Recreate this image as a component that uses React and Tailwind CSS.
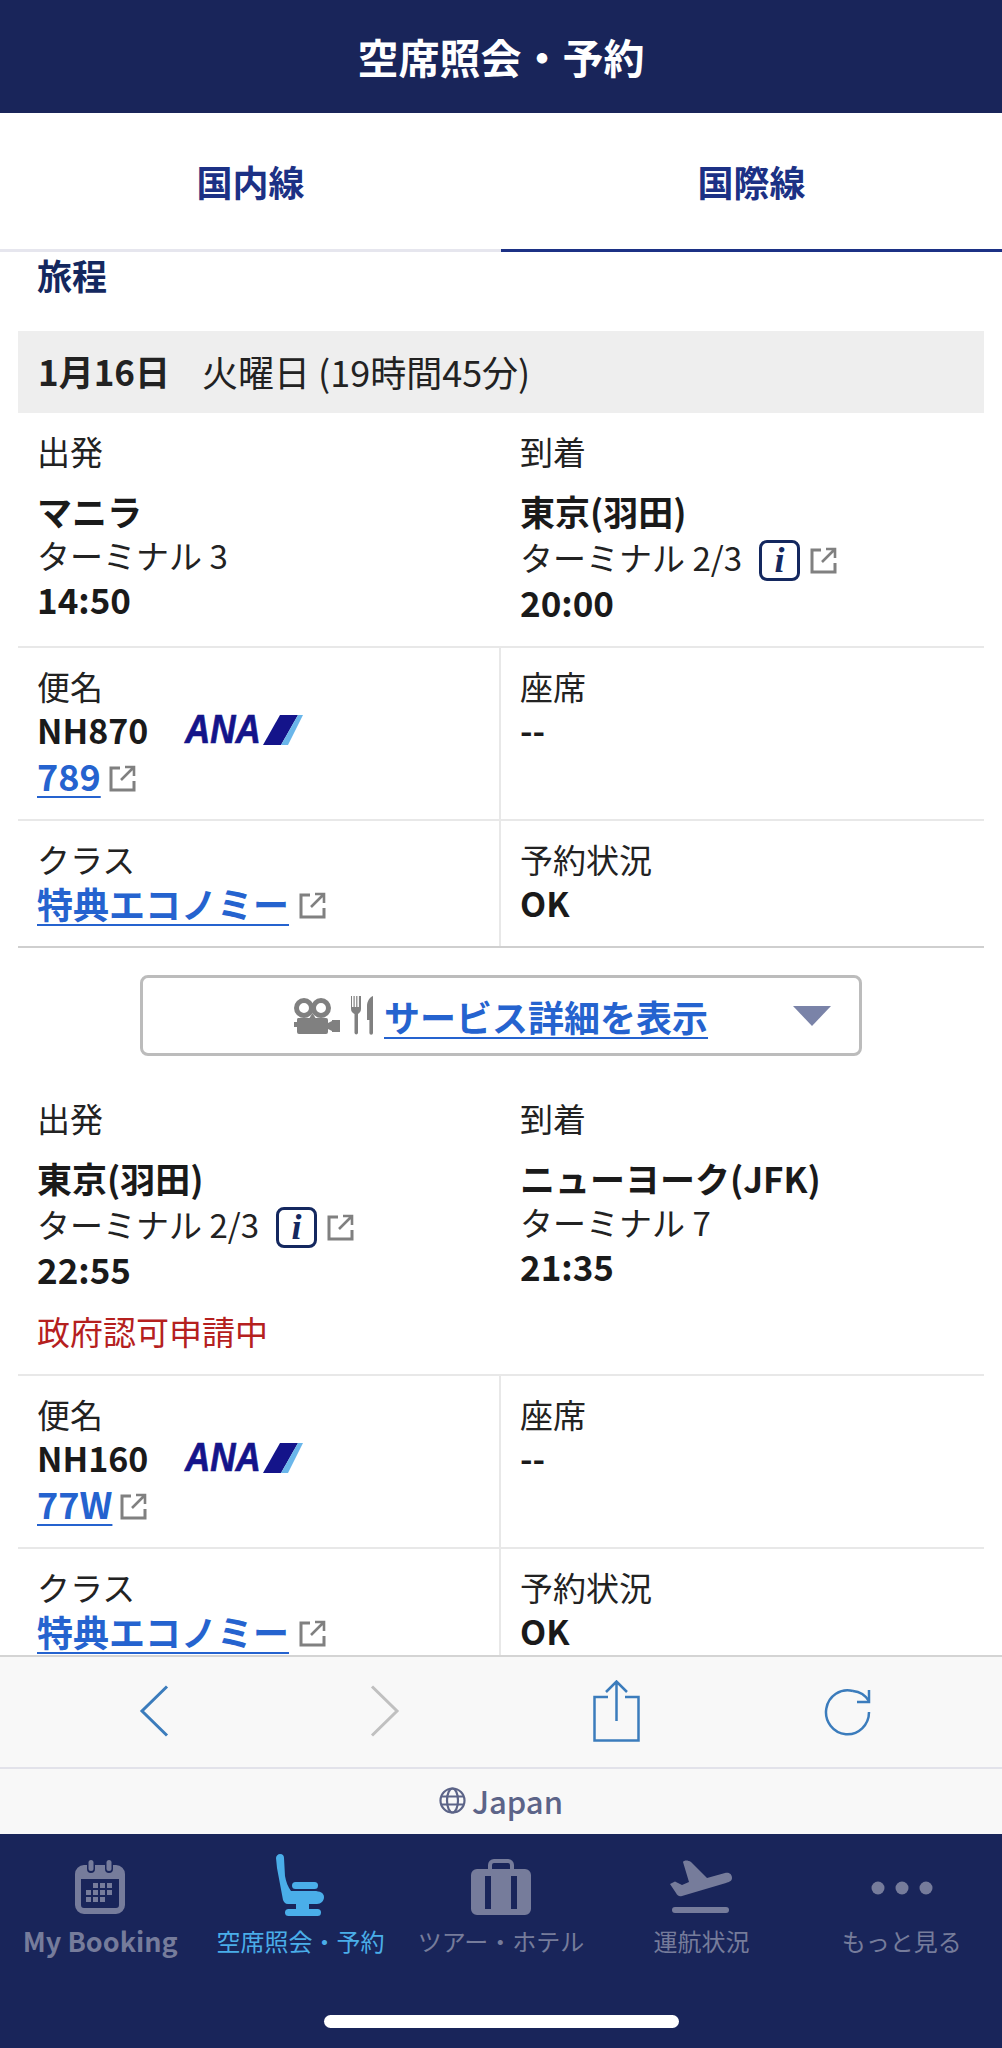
const FONT = { fontFamily: '"Noto Sans CJK JP", "Noto Sans", sans-serif' };

function ExtLink() {
  return (
    <svg width="27" height="27" viewBox="0 0 27 27" fill="none" stroke="#808080" strokeWidth="3" className="shrink-0 mt-[6px]">
      <path d="M11 3H2v22h23v-9" />
      <path d="M12 15L24 3M16 2h9v9" strokeWidth="2.6" />
    </svg>
  );
}

function InfoBadge() {
  return (
    <span className="w-[41px] h-[41px] mt-[5px] rounded-[8px] border-[3px] border-[#14285f] flex items-center justify-center text-[#14285f] text-[36px] font-bold italic leading-none shrink-0" style={{ fontFamily: '"Liberation Serif", serif' }}>
      i
    </span>
  );
}

function AnaLogo() {
  return (
    <svg width="120" height="32" viewBox="0 0 120 32" className="shrink-0 overflow-visible">
      <text x="0" y="25.500" transform="scale(1 1.15)" fontSize="35" fontWeight="700" fontStyle="italic" fill="#14148a" stroke="#14148a" strokeWidth="0.6" style={{ fontFamily: '"Liberation Sans", sans-serif' }}>ANA</text>
      <polygon points="95,1 113,1 96,31 78,31" fill="#14148a" />
      <polygon points="113,1 118,1 103,31 96,31" fill="#6ab6ea" />
    </svg>
  );
}

function Label({ children }) {
  return <div className="h-[44px] leading-[44px] text-[33px] text-[#222]">{children}</div>;
}

function Place({ label, name, terminal, time, badge, note }) {
  return (
    <div className="pl-[19px] pt-[16px]">
      <Label>{label}</Label>
      <div className="mt-[16px] h-[44px] leading-[44px] text-[35px] font-bold text-[#1a1a1a] whitespace-nowrap">{name}</div>
      <div className={`flex items-center gap-[17px] mt-[1px] text-[33px] text-[#222] whitespace-nowrap ${badge ? "h-[47px]" : "h-[44px]"}`}>
        <span>{terminal}</span>
        {badge && (
          <span className="flex items-center gap-[10px]">
            <InfoBadge />
            <ExtLink />
          </span>
        )}
      </div>
      <div className="h-[42px] leading-[42px] text-[35px] font-semibold text-[#1a1a1a]">{time}</div>
      {note && <div className="mt-[19px] h-[44px] leading-[44px] text-[33px] text-[#b5201e]">{note}</div>}
    </div>
  );
}

function Segment({ from, to, flight, plane, rowHeight, last }) {
  return (
    <div className="mx-[18px]">
      <div className="grid grid-cols-2 border-b-2 border-[#e8e8e8]" style={{ height: rowHeight }}>
        <Place {...from} />
        <Place {...to} />
      </div>
      <div className="grid grid-cols-2 h-[173px] border-b-2 border-[#e8e8e8]">
        <div className="pl-[19px] pt-[16px] border-r-2 border-[#e8e8e8]">
          <Label>便名</Label>
          <div className="flex items-center h-[43px] text-[34px] font-semibold text-[#1a1a1a]">
            <span className="w-[148px]">{flight}</span>
            <AnaLogo />
          </div>
          <div className="flex items-center gap-[8px] h-[48px] text-[36px] font-semibold">
            <a className="text-[#2563cf] underline underline-offset-[5px] decoration-2">{plane}</a>
            <ExtLink />
          </div>
        </div>
        <div className="pl-[19px] pt-[16px]">
          <Label>座席</Label>
          <div className="h-[43px] leading-[43px] text-[34px] font-semibold text-[#1a1a1a]">--</div>
        </div>
      </div>
      <div className={`grid grid-cols-2 h-[127px] ${last ? "" : "border-b-2 border-[#cfcfcf]"}`}>
        <div className="pl-[19px] pt-[16px] border-r-2 border-[#e8e8e8]">
          <Label>クラス</Label>
          <div className="flex items-center gap-[10px] h-[43px] text-[36px] font-semibold">
            <a className="text-[#2563cf] underline underline-offset-[5px] decoration-2">特典エコノミー</a>
            <ExtLink />
          </div>
        </div>
        <div className="pl-[19px] pt-[16px]">
          <Label>予約状況</Label>
          <div className="h-[43px] leading-[43px] text-[34px] font-semibold text-[#1a1a1a]">OK</div>
        </div>
      </div>
    </div>
  );
}

function ServiceButton() {
  return (
    <div className="mx-[140px] mt-[27px] mb-[24px] h-[81px] rounded-[8px] border-[3px] border-[#bcbcbc] flex items-center pl-[150px] pr-[28px]">
      <svg width="47" height="36" viewBox="0 0 47 36" fill="#808080" className="shrink-0">
        <circle cx="11" cy="10" r="7.5" fill="none" stroke="#808080" strokeWidth="5" />
        <circle cx="28" cy="10" r="7.5" fill="none" stroke="#808080" strokeWidth="5" />
        <path d="M5 20h28a2 2 0 0 1 2 2v12a2 2 0 0 1-2 2H6a2 2 0 0 1-2-2v-5H1v-5h3v-2a2 2 0 0 1 1-2z" />
        <path d="M35 25l4-2v-1h8v12h-8v-1l-4-2z" />
        <path d="M19.5 15l3 5h-6z" />
      </svg>
      <svg width="24" height="39" viewBox="0 0 24 39" fill="#808080" className="ml-[10px] shrink-0">
        <path d="M1 0h1v11h1.5V0h1.2v11h1.5V0h1.2v11h1.5V0H11v13c0 3-2 4-3 5v19a1.8 1.8 0 0 1-3.5 0V18c-1.500-1-3.500-2-3.500-5z" />
        <path d="M23 0v37a1.800 1.800 0 0 1-3.600 0V24h-2.400V10c0-5 3-9 6-10z" />
      </svg>
      <a className="ml-[10px] text-[36px] font-semibold text-[#2563cf] underline underline-offset-[5px] decoration-2 whitespace-nowrap">サービス詳細を表示</a>
      <svg width="38" height="20" viewBox="0 0 38 20" className="ml-auto shrink-0">
        <polygon points="0,0 38,0 19,20" fill="#7a83a8" />
      </svg>
    </div>
  );
}

function Toolbar() {
  return (
    <div className="h-[114px] bg-[#f8f8f8] border-t-2 border-[#d4d4d4] border-b-2 border-b-[#e2e2ea] flex items-center px-[38px]">
      <div className="flex-1 flex justify-center pb-[2px]">
        <svg width="30" height="52" viewBox="0 0 30 52" fill="none" stroke="#3b7cbc" strokeWidth="3">
          <path d="M28 1.500L3 26l25 24.500" />
        </svg>
      </div>
      <div className="flex-1 flex justify-center pb-[2px]">
        <svg width="30" height="52" viewBox="0 0 30 52" fill="none" stroke="#c0c0c0" strokeWidth="3">
          <path d="M2 1.500L27 26 2 50.500" />
        </svg>
      </div>
      <div className="flex-1 flex justify-center pb-[2px]">
        <svg width="47" height="62" viewBox="0 0 47 62" fill="none" stroke="#3b7cbc" strokeWidth="2.500">
          <path d="M15 17H1.500v43.500h44V17H32" />
          <path d="M23.500 41V2M13 12L23.500 1.500 34 12" />
        </svg>
      </div>
      <div className="flex-1 flex justify-center">
        <svg width="48" height="48" viewBox="0 0 48 48" fill="none" stroke="#3b7cbc" strokeWidth="2.500">
          <path d="M45 24a21.500 22 0 1 1-16-21" />
          <path d="M45 2v12H33" />
          <path d="M45 13A21.500 22 0 0 0 29 3" />
        </svg>
      </div>
    </div>
  );
}

function Region() {
  return (
    <div className="h-[65px] pb-[3px] bg-[#f8f8f8] flex items-center justify-center gap-[6px]">
      <svg width="27" height="27" viewBox="0 0 27 27" fill="none" stroke="#5c6488" strokeWidth="2.200">
        <circle cx="13.500" cy="13.500" r="12" />
        <ellipse cx="13.500" cy="13.500" rx="5.500" ry="12" />
        <path d="M2 9.500h23M2 17.500h23" />
      </svg>
      <span className="text-[31px] font-medium text-[#5c6488] leading-none">Japan</span>
    </div>
  );
}

function NavItem({ label, active, latin, children }) {
  return (
    <div className="flex-1 flex flex-col items-center min-w-0">
      <div className="h-[88px] flex items-end justify-center">{children}</div>
      <div className={`mt-[1px] h-[36px] leading-[36px] whitespace-nowrap ${latin ? "text-[27px] font-semibold" : "text-[24px]"} ${active ? "text-[#4aaee9]" : "text-[#767c9b]"}`}>
        {label}
      </div>
    </div>
  );
}

function BottomNav() {
  return (
    <div className="h-[214px] bg-[#19255a] relative">
      <div className="flex">
        <NavItem label="My Booking" latin>
          <svg width="50" height="54" viewBox="0 0 50 54" className="mb-[8px]">
            <path fillRule="evenodd" fill="#767c9b" d="M9 5h3v4a4 4 0 0 0 8 0V5h10v4a4 4 0 0 0 8 0V5h3a9 9 0 0 1 9 9v31a9 9 0 0 1-9 9H9a9 9 0 0 1-9-9V14a9 9 0 0 1 9-9zM6 19v26a3 3 0 0 0 3 3h32a3 3 0 0 0 3-3V19z" />
            <rect x="13.500" y="0" width="5" height="11" rx="2.500" fill="#767c9b" />
            <rect x="31.500" y="0" width="5" height="11" rx="2.500" fill="#767c9b" />
            <path fill="#767c9b" d="M18 23h5v5h-5zM25 23h5v5h-5zM32 23h5v5h-5zM11 30h5v5h-5zM18 30h5v5h-5zM25 30h5v5h-5zM32 30h5v5h-5zM11 37h5v5h-5zM18 37h5v5h-5zM25 37h5v5h-5z" />
          </svg>
        </NavItem>
        <NavItem label="空席照会・予約" active>
          <svg width="50" height="62" viewBox="0 0 50 62" fill="#4aaee9" className="mb-[6px]">
            <path d="M4 0C7 0 8 2 8 4L9 22C10 28 12 33 15 37L38 37C44 37 48 39 48 43C48 47 45 50 41 50L12 50C9 50 8 48 7 46L1 14L0 4C0 2 2 0 4 0Z" />
            <rect x="16" y="28" width="26" height="7" rx="3.500" />
            <rect x="20" y="49" width="13" height="8" />
            <rect x="9" y="55" width="36" height="7" rx="3.500" />
          </svg>
        </NavItem>
        <NavItem label="ツアー・ホテル">
          <svg width="60" height="57" viewBox="0 0 60 57" className="mb-[7px]">
            <path fill="none" stroke="#767c9b" strokeWidth="4" d="M19 13V7a4 4 0 0 1 4-4h14a4 4 0 0 1 4 4v6" />
            <path fillRule="evenodd" fill="#767c9b" d="M6 11h48a6 6 0 0 1 6 6v34a6 6 0 0 1-6 6H6a6 6 0 0 1-6-6V17a6 6 0 0 1 6-6zM14 18v33h6V18zM40 18v33h6V18z" />
          </svg>
        </NavItem>
        <NavItem label="運航状況">
          <svg width="62" height="54" viewBox="0 0 62 54" fill="#767c9b" className="mb-[8px]">
            <path d="M13 2C14 0 18 0 21 2L37 18L55 13C60 12 62 15 62 18C62 21 59 22 56 23L12 36C9 37 7 35 6 33L0 24L5 21.500L12 25L19 22Z" />
            <rect x="2" y="47" width="57" height="6" rx="3" />
          </svg>
        </NavItem>
        <NavItem label="もっと見る">
          <svg width="62" height="14" viewBox="0 0 62 14" fill="#767c9b" className="mb-[27px]">
            <circle cx="7" cy="7" r="6.500" />
            <circle cx="31" cy="7" r="6.500" />
            <circle cx="55" cy="7" r="6.500" />
          </svg>
        </NavItem>
      </div>
      <div className="absolute left-[324px] top-[181px] w-[355px] h-[13px] rounded-full bg-white" />
    </div>
  );
}

export default function App() {
  return (
    <div className="h-[2048px] w-[1002px] flex flex-col overflow-hidden bg-white" style={FONT}>
      <div className="h-[113px] shrink-0 bg-[#19255a] flex items-center justify-center text-white text-[41px] font-bold">
        空席照会・予約
      </div>
      <div className="flex-1 min-h-0 overflow-hidden">
        <div className="h-[139px] grid grid-cols-2 text-[36px] font-bold text-[#1c3185] text-center">
          <div className="flex items-center justify-center border-b-[3px] border-[#e6e6ee]">国内線</div>
          <div className="flex items-center justify-center border-b-[3px] border-[#1c3185]">国際線</div>
        </div>
        <div className="pl-[37px] h-[46px] leading-[46px] text-[35px] font-bold text-[#14285f]">旅程</div>
        <div className="mx-[18px] mt-[33px] h-[82px] pb-[2px] bg-[#eeeeee] flex items-center pl-[20px] text-[35px] text-[#222]">
          <span className="font-bold mr-[32px]">1月16日</span>
          <span className="text-[36px]">火曜日 (19時間45分)</span>
        </div>
        <Segment
          rowHeight={235}
          flight="NH870"
          plane="789"
          from={{ label: "出発", name: "マニラ", terminal: "ターミナル 3", time: "14:50" }}
          to={{ label: "到着", name: "東京(羽田)", terminal: "ターミナル 2/3", time: "20:00", badge: true }}
        />
        <ServiceButton />
        <Segment
          rowHeight={296}
          flight="NH160"
          plane="77W"
          last
          from={{ label: "出発", name: "東京(羽田)", terminal: "ターミナル 2/3", time: "22:55", badge: true, note: "政府認可申請中" }}
          to={{ label: "到着", name: "ニューヨーク(JFK)", terminal: "ターミナル 7", time: "21:35" }}
        />
      </div>
      <div className="shrink-0">
        <Toolbar />
        <Region />
        <BottomNav />
      </div>
    </div>
  );
}
